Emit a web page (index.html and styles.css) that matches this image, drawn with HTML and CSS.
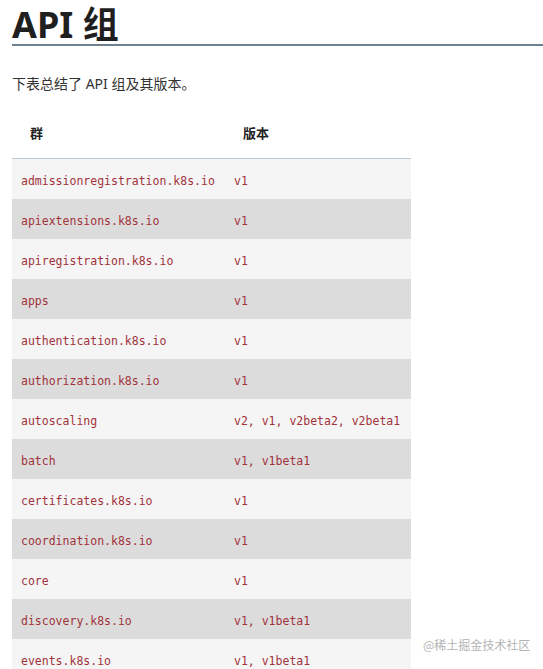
FILE: index.html
```html
<!DOCTYPE html>
<html lang="zh">
<head>
<meta charset="utf-8">
<title>API 组</title>
<link rel="stylesheet" href="styles.css">
</head>
<body>
<main class="doc">
  <h1 class="title">API 组</h1>
  <p class="intro">下表总结了 API 组及其版本。</p>
  <table class="groups">
    <colgroup><col class="col1"><col class="col2"></colgroup>
    <thead>
      <tr><th>群</th><th>版本</th></tr>
    </thead>
    <tbody>
      <tr><td><code>admissionregistration.k8s.io</code></td><td><code>v1</code></td></tr>
      <tr><td><code>apiextensions.k8s.io</code></td><td><code>v1</code></td></tr>
      <tr><td><code>apiregistration.k8s.io</code></td><td><code>v1</code></td></tr>
      <tr><td><code>apps</code></td><td><code>v1</code></td></tr>
      <tr><td><code>authentication.k8s.io</code></td><td><code>v1</code></td></tr>
      <tr><td><code>authorization.k8s.io</code></td><td><code>v1</code></td></tr>
      <tr><td><code>autoscaling</code></td><td><code>v2, v1, v2beta2, v2beta1</code></td></tr>
      <tr><td><code>batch</code></td><td><code>v1, v1beta1</code></td></tr>
      <tr><td><code>certificates.k8s.io</code></td><td><code>v1</code></td></tr>
      <tr><td><code>coordination.k8s.io</code></td><td><code>v1</code></td></tr>
      <tr><td><code>core</code></td><td><code>v1</code></td></tr>
      <tr><td><code>discovery.k8s.io</code></td><td><code>v1, v1beta1</code></td></tr>
      <tr><td><code>events.k8s.io</code></td><td><code>v1, v1beta1</code></td></tr>
    </tbody>
  </table>
</main>
<div class="watermark">@稀土掘金技术社区</div>
</body>
</html>
```
FILE: styles.css
```css
html, body {
  margin: 0;
  padding: 0;
  background: #ffffff;
}
body {
  font-family: "Noto Sans", "Noto Sans CJK SC", sans-serif;
  color: #222222;
  overflow: hidden;
}
.doc {
  padding: 0 0 0 12px;
}
.title {
  margin: 0;
  padding: 0;
  font-size: 36px;
  line-height: 50px;
  height: 44px;
  font-weight: 700;
  color: #1f1f1f;
  border-bottom: 2px solid #6e7f8d;
}
.intro {
  margin: 28px 0 0 0;
  font-size: 14px;
  line-height: 20px;
  color: #333333;
}
.groups {
  border-collapse: collapse;
  margin-top: 16px;
  width: 399px;
  table-layout: fixed;
}
.groups .col1 { width: 213px; }
.groups .col2 { width: 186px; }
.groups th {
  text-align: left;
  font-size: 13px;
  font-weight: 700;
  color: #222222;
  height: 45px;
  padding: 0 0 3px 18px;
  border-bottom: 1px solid #b9c9d5;
  vertical-align: middle;
}
.groups td {
  height: 40px;
  padding: 0 0 0 9px;
  vertical-align: middle;
  box-sizing: border-box;
}
.groups tbody tr:nth-child(odd) td { background: #f5f5f5; }
.groups tbody tr:nth-child(even) td { background: #dcdcdc; }
.groups code {
  font-family: "DejaVu Sans Mono", "Liberation Mono", monospace;
  font-size: 11.5px;
  color: #a1333b;
  white-space: nowrap;
}
.watermark {
  position: absolute;
  left: 423px;
  top: 637px;
  font-size: 12px;
  line-height: 16px;
  color: #b4b4b4;
  font-family: "Noto Sans CJK SC", sans-serif;
}
```
